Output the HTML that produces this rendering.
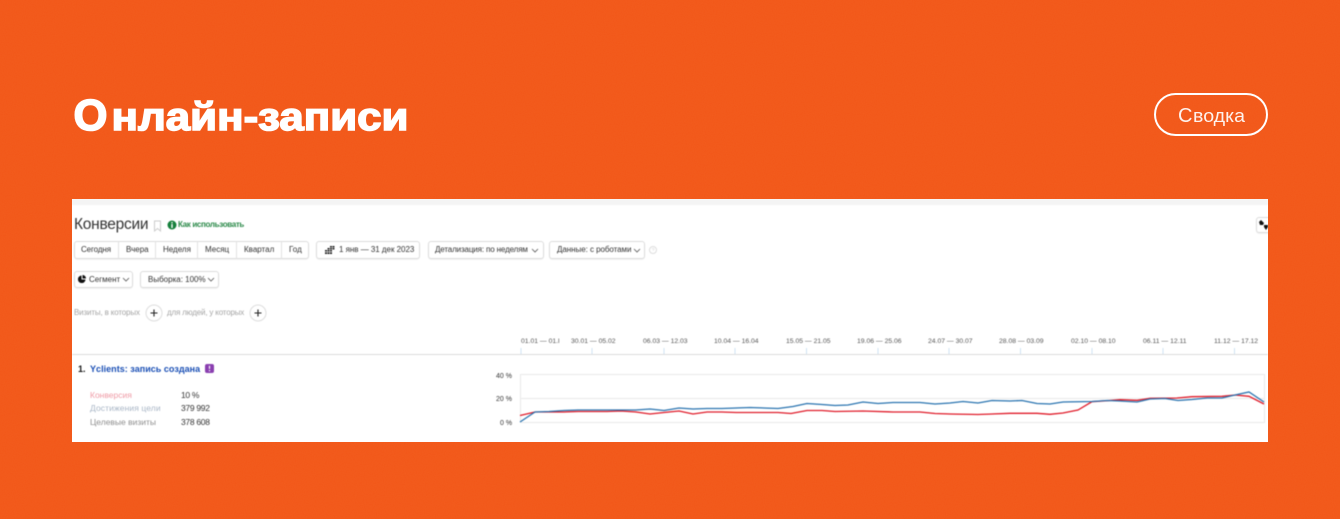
<!DOCTYPE html>
<html lang="ru">
<head>
<meta charset="utf-8">
<style>
html,body{margin:0;padding:0}
body{width:1340px;height:519px;overflow:hidden;background:#f2581a;position:relative;font-family:"Liberation Sans","Noto Sans CJK SC",sans-serif}
.abs,.t{position:absolute;white-space:nowrap}
#shot{position:absolute;left:72px;top:199px;width:1196px;height:243px;background:#fff;overflow:hidden}
#inner{position:absolute;left:-72px;top:-199px;width:1340px;height:519px;filter:blur(.4px)}
.t{font-size:8px;line-height:10px;color:#333}
.b{position:absolute;box-sizing:border-box;border:1px solid #dcdcdc;border-radius:3px;background:#fff;box-shadow:0 1px 1px rgba(0,0,0,.05)}
.d{position:absolute;top:241px;width:1px;height:18px;background:#e2e2e2}
.m{color:#555;font-size:6.800px}
</style>
</head>
<body>
<svg class="abs" style="left:0;top:0" width="1340" height="519">
<filter id="n"><feTurbulence type="fractalNoise" baseFrequency=".9" numOctaves="2" seed="4"/><feColorMatrix values="0 0 0 0 1  0 0 0 0 .5  0 0 0 0 .15  0 0 0 .35 -.08"/></filter>
<rect width="1340" height="519" filter="url(#n)" opacity=".2"/>
<text x="73.500" y="130" fill="#fff" stroke="#fff" stroke-width="1.600" font-family="'Liberation Sans',sans-serif" font-weight="700" font-size="44" textLength="34" lengthAdjust="spacingAndGlyphs">О</text>
<text x="111.500" y="130" fill="#fff" stroke="#fff" stroke-width="1.500" font-family="'Liberation Sans',sans-serif" font-weight="700" font-size="38.500" textLength="297" lengthAdjust="spacingAndGlyphs">нлайн-записи</text>
<rect x="1155" y="94" width="112" height="41" rx="20.500" fill="none" stroke="#fff" stroke-width="2"/>
<text x="1178" y="122" fill="#fff" fill-opacity=".92" font-family="'Liberation Sans',sans-serif" font-size="20" textLength="14">С</text>
<text x="1193" y="122" fill="#fff" fill-opacity=".92" font-family="'Liberation Sans',sans-serif" font-size="18" textLength="52" lengthAdjust="spacingAndGlyphs">водка</text>
</svg>

<div id="shot"><div id="inner">
<div class="abs" style="left:72px;top:199px;width:1196px;height:6px;background:#f4f4f4"></div>

<div class="t" style="left:74px;top:215px;font-size:15.500px;line-height:20px;color:#333;letter-spacing:-.25px">Конверсии</div>
<svg class="abs" style="left:153px;top:220px" width="9" height="12"><path d="M1.500 1h6v10L4.500 8.500 1.500 11z" fill="none" stroke="#ccc"/></svg>
<svg class="abs" style="left:167px;top:220px" width="10" height="10"><circle cx="5" cy="5" r="4.500" fill="#16803c"/><rect x="4.300" y="4" width="1.400" height="4" fill="#fff"/><rect x="4.300" y="2" width="1.400" height="1.300" fill="#fff"/></svg>
<div class="t" style="left:178px;top:220px;font-size:8px;font-weight:700;color:#2c8a4a;letter-spacing:-.33px">Как использовать</div>

<div class="b" style="left:74px;top:241px;width:235px;height:18px"></div>
<div class="d" style="left:118px"></div><div class="d" style="left:155px"></div><div class="d" style="left:197px"></div><div class="d" style="left:236px"></div><div class="d" style="left:281px"></div>
<div class="t" style="left:81px;top:245px;letter-spacing:-.1px">Сегодня</div>
<div class="t" style="left:126px;top:245px">Вчера</div>
<div class="t" style="left:163px;top:245px">Неделя</div>
<div class="t" style="left:205px;top:245px">Месяц</div>
<div class="t" style="left:244px;top:245px">Квартал</div>
<div class="t" style="left:289px;top:245px">Год</div>

<div class="b" style="left:316px;top:241px;width:104px;height:18px"></div>
<svg class="abs" style="left:325px;top:246px" width="10" height="8"><path d="M0 4h2v1.500H0zM0 6.200h2V8H0zM2.500 2h2v1.500h-2zM2.500 4h2v1.500h-2zM2.500 6.200h2V8h-2zM5 0h2v1.500H5zM5 2h2v1.500H5zM5 4h2v1.500H5zM5 6.200h2V8H5zM7.500 0h2v1.500h-2zM7.500 2h2v1.500h-2z" fill="#222"/></svg>
<div class="t" style="left:339px;top:245px;letter-spacing:-.03px">1 янв — 31 дек 2023</div>

<div class="b" style="left:428px;top:241px;width:116px;height:18px"></div>
<div class="t" style="left:435px;top:245px;letter-spacing:-.13px">Детализация: по неделям</div>
<svg class="abs" style="left:531px;top:248px" width="8" height="5"><path d="M1 1l3 3 3-3" fill="none" stroke="#555" stroke-width=".8"/></svg>

<div class="b" style="left:549px;top:241px;width:96px;height:18px"></div>
<div class="t" style="left:557px;top:245px;letter-spacing:-.05px">Данные: с роботами</div>
<svg class="abs" style="left:633px;top:248px" width="8" height="5"><path d="M1 1l3 3 3-3" fill="none" stroke="#555" stroke-width=".8"/></svg>
<svg class="abs" style="left:649px;top:246px" width="8" height="8"><circle cx="4" cy="4" r="3.500" fill="none" stroke="#ddd"/><path d="M3 3.200c.2-1.200 2-1.200 2 0 0 .8-1 .8-1 1.600" fill="none" stroke="#ddd" stroke-width=".7"/></svg>

<div class="b" style="left:74px;top:271px;width:59px;height:17px"></div>
<svg class="abs" style="left:78px;top:275px" width="8" height="8"><path d="M3.500 .5V4.500H7.500A3.800 3.800 0 1 1 3.500 .5zM4.500 0A3.500 3.500 0 0 1 8 3.500H4.500z" fill="#111"/></svg>
<div class="t" style="left:89px;top:275px">Сегмент</div>
<svg class="abs" style="left:122px;top:277px" width="8" height="5"><path d="M1 1l3 3 3-3" fill="none" stroke="#555" stroke-width=".8"/></svg>

<div class="b" style="left:140px;top:271px;width:79px;height:17px"></div>
<div class="t" style="left:148px;top:275px">Выборка: 100%</div>
<svg class="abs" style="left:207px;top:277px" width="8" height="5"><path d="M1 1l3 3 3-3" fill="none" stroke="#555" stroke-width=".8"/></svg>

<div class="t" style="left:74px;top:307.500px;letter-spacing:-.15px;color:#a5a5a5">Визиты, в которых</div>
<div class="t" style="left:167px;top:307.500px;letter-spacing:-.18px;color:#a5a5a5">для людей, у которых</div>
<svg class="abs" style="left:145px;top:304px" width="122" height="18">
<circle cx="9" cy="9" r="8" fill="#fff" stroke="#ddd"/><path d="M5.500 9h7M9 5.500v7" stroke="#222" stroke-width="1.100"/>
<circle cx="113" cy="9" r="8" fill="#fff" stroke="#ddd"/><path d="M109.500 9h7M113 5.500v7" stroke="#222" stroke-width="1.100"/>
</svg>

<div class="b" style="left:1256px;top:217px;width:20px;height:16px"></div>
<svg class="abs" style="left:1259px;top:220px" width="9" height="10"><path d="M0 2l2-2 3 3-1 2H1zM5 5h4v2l-2 3-2-3z" fill="#111"/></svg>

<svg class="abs" style="left:0;top:0" width="1340" height="519">
<path d="M72 354.500H1268" stroke="#dcdcdc"/>
<path d="M521 348v6M592 348v6M664 348v6M735 348v6M806.500 348v6M878 348v6M949 348v6M1020.500 348v6M1092 348v6M1163 348v6M1234.500 348v6" stroke="#cfe3f3"/>
<path d="M520.500 374.500H1264.500V422.500H520.500zM520.500 398.500H1264.500" fill="none" stroke="#eaeaea"/>
<polyline fill="none" stroke="#e01c2a" stroke-width="1.300" points="520,415.500 535,412 549,412 564,412 578,411.500 607,411.500 621,411 636,412 650,414 664,412.500 679,411 693,414 707,412 722,412 736,412.500 750,412.500 778,412.500 791,413.500 807,410.500 822,410.500 835,411.500 863,411 893,412 920,412 935,413.500 950,414 978,414.500 992,414 1010,413.300 1037,413.300 1050,414.300 1063,413 1078,410 1092,401.700 1107,400.700 1120,399.700 1137,400.300 1150,398.300 1177,398 1192,396.700 1222,396.300 1235,395 1249,396.300 1264,404"/>
<polyline fill="none" stroke="#2a74b0" stroke-width="1.300" points="520,422 535,412 549,411.500 564,410.500 578,410 592,410 607,410 621,410 636,410 650,409 664,410.500 679,408 693,409 707,408.500 722,408.500 736,408 750,407.500 778,408.500 793,406.500 807,403.500 822,404.500 835,405.500 848,405 863,402 878,403.500 893,402.500 920,402.500 935,404 950,403 963,401.500 978,403 992,400.500 1010,401 1022,400.500 1037,403.500 1050,404 1063,402 1092,401.500 1107,400.500 1120,401 1137,402 1150,399 1165,398.500 1178,400.500 1192,399.500 1207,398 1222,398 1235,395 1249,392 1264,402"/>
</svg>

<div class="t m" style="left:521px;top:337px">01.01 — 01.l</div>
<div class="t m" style="left:571px;top:337px">30.01 — 05.02</div>
<div class="t m" style="left:643px;top:337px">06.03 — 12.03</div>
<div class="t m" style="left:714px;top:337px">10.04 — 16.04</div>
<div class="t m" style="left:786px;top:337px">15.05 — 21.05</div>
<div class="t m" style="left:857px;top:337px">19.06 — 25.06</div>
<div class="t m" style="left:928px;top:337px">24.07 — 30.07</div>
<div class="t m" style="left:999px;top:337px">28.08 — 03.09</div>
<div class="t m" style="left:1071px;top:337px">02.10 — 08.10</div>
<div class="t m" style="left:1143px;top:337px">06.11 — 12.11</div>
<div class="t m" style="left:1214px;top:337px">11.12 — 17.12</div>

<div class="t" style="left:496px;top:372px;font-size:7px">40 %</div>
<div class="t" style="left:496px;top:395px;font-size:7px">20 %</div>
<div class="t" style="left:500px;top:419px;font-size:7px">0 %</div>

<div class="t" style="left:78px;top:364px;font-size:9px;font-weight:700;color:#111">1.</div>
<div class="t" style="left:90px;top:364px;font-size:9px;font-weight:700;color:#1a4fb5;letter-spacing:.03px">Yclients: запись создана</div>
<svg class="abs" style="left:204.500px;top:364px" width="9" height="9"><rect width="9" height="9" rx="2" fill="#8a3fb0"/><path d="M4.500 1.700v3.200M4.500 6v1.300" stroke="#fff" stroke-width="1.200"/></svg>

<div class="t" style="left:90px;top:389.500px;color:#ef9aa5;font-size:8.500px">Конверсия</div>
<div class="t" style="left:181px;top:389.500px;font-size:8.500px;letter-spacing:-.3px">10 %</div>
<div class="t" style="left:90px;top:403px;color:#a9b6c6;font-size:8.500px;letter-spacing:.1px">Достижения цели</div>
<div class="t" style="left:181px;top:403px;font-size:8.500px;letter-spacing:-.3px">379 992</div>
<div class="t" style="left:90px;top:416.500px;color:#8f8f8f;font-size:8.500px">Целевые визиты</div>
<div class="t" style="left:181px;top:416.500px;font-size:8.500px;letter-spacing:-.3px">378 608</div>
</div></div>
</body>
</html>
